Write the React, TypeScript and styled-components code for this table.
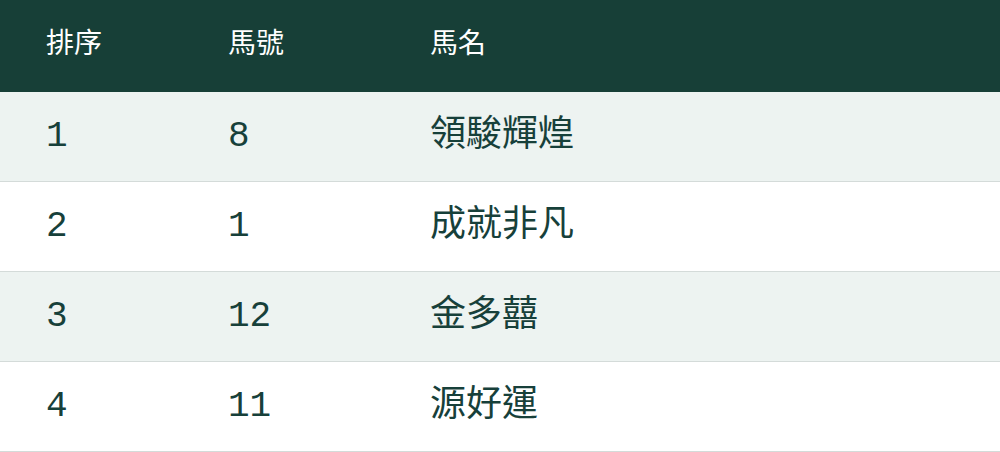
import React from "react";
import styled, { createGlobalStyle } from "styled-components";

const GlobalStyle = createGlobalStyle`
  html, body { margin: 0; padding: 0; background: #ffffff; }
  body { font-family: "Liberation Mono", "Noto Sans CJK TC", monospace; }
`;

const Table = styled.div`
  width: 1000px;
  display: flex;
  flex-direction: column;
`;

const HeaderRow = styled.div`
  display: grid;
  grid-template-columns: 182px 202px 1fr;
  height: 92px;
  align-items: center;
  padding-left: 46px;
  background: #173f37;
  color: #ffffff;
  font-size: 28px;
  box-sizing: border-box;
`;

const Row = styled.div<{ $shaded: boolean }>`
  display: grid;
  grid-template-columns: 182px 202px 1fr;
  height: 90px;
  align-items: center;
  padding-left: 46px;
  background: ${(p) => (p.$shaded ? "#edf3f1" : "#ffffff")};
  color: #17403a;
  font-size: 36px;
  border-bottom: 1px solid #d4dbd9;
  box-sizing: border-box;
`;

const Cell = styled.div`
  white-space: nowrap;
  line-height: 1;
`;

const rows = [
  { rank: "1", no: "8", name: "領駿輝煌" },
  { rank: "2", no: "1", name: "成就非凡" },
  { rank: "3", no: "12", name: "金多囍" },
  { rank: "4", no: "11", name: "源好運" },
];

export default function App() {
  return (
    <>
      <GlobalStyle />
      <Table>
        <HeaderRow>
          <Cell>排序</Cell>
          <Cell>馬號</Cell>
          <Cell>馬名</Cell>
        </HeaderRow>
        {rows.map((r, i) => (
          <Row key={r.rank} $shaded={i % 2 === 0}>
            <Cell>{r.rank}</Cell>
            <Cell>{r.no}</Cell>
            <Cell>{r.name}</Cell>
          </Row>
        ))}
      </Table>
    </>
  );
}
